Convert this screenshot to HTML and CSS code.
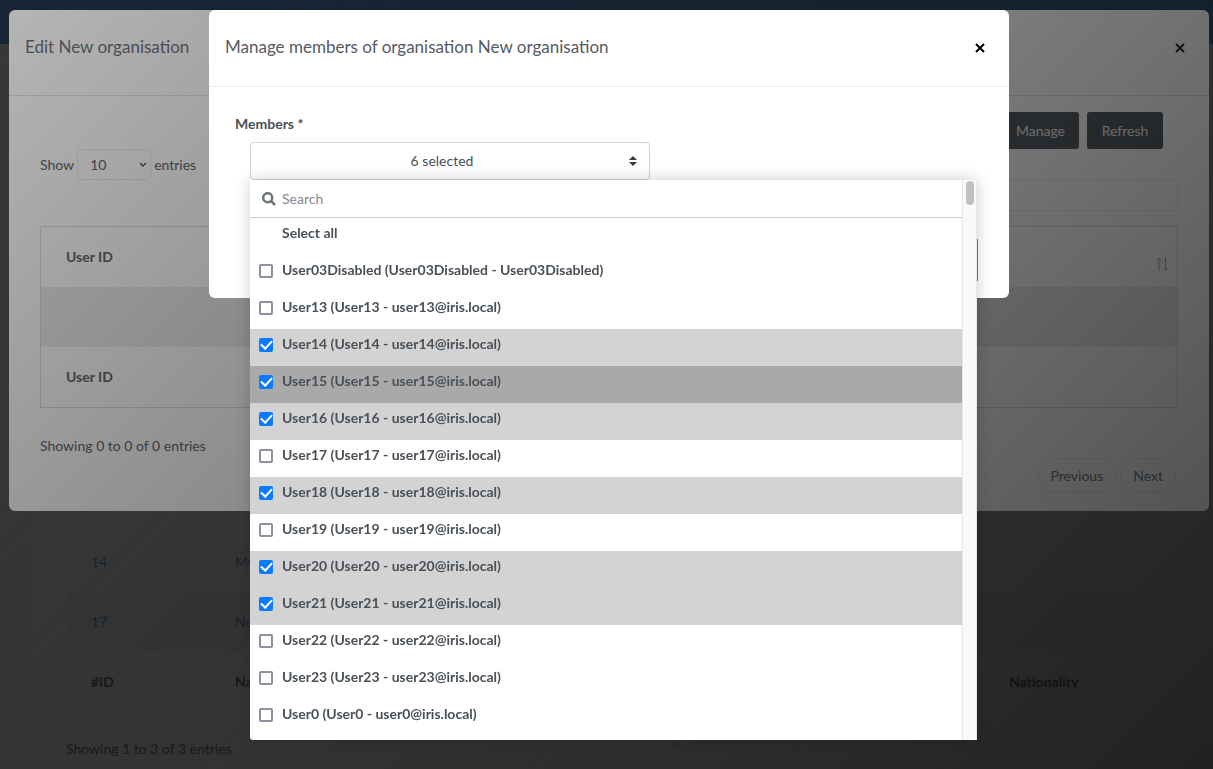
FILE: index.html
```html
<!DOCTYPE html>
<html lang="en">
<head>
<meta charset="utf-8">
<title>Manage organisation members</title>
<link rel="stylesheet" href="styles.css">
</head>
<body>
<div class="page">
  <header class="topbar"></header>
  <main class="card">
    <table class="orgs">
      <tbody>
        <tr><td class="col-id"><a href="#">14</a></td><td><a href="#">My</a></td><td class="col-nat"></td></tr>
        <tr class="odd"><td><a href="#">17</a></td><td><a href="#">New</a></td><td></td></tr>
      </tbody>
      <tfoot>
        <tr><th>#ID</th><th>Name</th><th>Nationality</th></tr>
      </tfoot>
    </table>
    <p class="orgs-info">Showing 1 to 3 of 3 entries</p>
  </main>
</div>
<div class="dim"></div>

<div class="layer">
  <section class="modal modal-wide">
    <header class="modal-head head-tall">
      <h2>Edit New organisation</h2>
      <button class="close" type="button" aria-label="Close"><svg width="10" height="10" viewBox="0 0 10 10"><path d="M1 1l8 8M9 1l-8 8"/></svg></button>
    </header>
    <div class="modal-main">
      <div class="actions">
        <button class="btn-dark" type="button">Manage</button>
        <button class="btn-dark" type="button">Refresh</button>
      </div>
      <label class="length">Show
        <span class="length-box"><select class="length-select"><option>10</option></select><svg width="8" height="6" viewBox="0 0 8 6"><path d="M1 1l3 3 3-3"/></svg></span>
        entries</label>
      <input class="filter" type="search" aria-label="Filter">
      <table class="members">
        <thead><tr><th>User ID</th><th class="sort"><svg width="14" height="14" viewBox="0 0 14 14"><path d="M4 13.500V1M1.500 3.500L4 1l2.500 2.500M10.500 .5V13M8 10.500l2.500 2.500 2.500-2.500"/></svg></th></tr></thead>
        <tbody><tr><td colspan="2"></td></tr></tbody>
        <tfoot><tr><th>User ID</th><th></th></tr></tfoot>
      </table>
      <p class="members-info">Showing 0 to 0 of 0 entries</p>
      <nav class="pager">
        <a href="#">Previous</a>
        <a href="#">Next</a>
      </nav>
    </div>
  </section>
</div>
<div class="dim dim-slope"></div>

<div class="layer">
  <section class="modal modal-medium">
    <header class="modal-head">
      <h2>Manage members of organisation New organisation</h2>
      <button class="close" type="button" aria-label="Close"><svg width="10" height="10" viewBox="0 0 10 10"><path d="M1 1l8 8M9 1l-8 8"/></svg></button>
    </header>
    <form class="modal-form">
      <label class="field-label" for="members">Members *</label>
      <div class="picker">
        <button class="picker-button" id="members" type="button"><span>6 selected</span><svg width="8" height="10" viewBox="0 0 8 10"><path d="M4 0l4 4H0zM4 10L0 6h8z"/></svg></button>
        <div class="menu">
          <div class="menu-list">
            <div class="menu-search">
              <svg width="14" height="14" viewBox="0 0 14 14"><circle cx="5.700" cy="5.700" r="4.500"/><path d="M9 9l4 4"/></svg>
              <input type="text" placeholder="Search" aria-label="Search">
            </div>
            <button class="row row-all" type="button">Select all</button>
            <label class="row"><input type="checkbox">User03Disabled (User03Disabled - User03Disabled)</label>
            <label class="row"><input type="checkbox">User13 (User13 - user13@iris.local)</label>
            <label class="row on"><input type="checkbox" checked>User14 (User14 - user14@iris.local)</label>
            <label class="row on active"><input type="checkbox" checked>User15 (User15 - user15@iris.local)</label>
            <label class="row on"><input type="checkbox" checked>User16 (User16 - user16@iris.local)</label>
            <label class="row"><input type="checkbox">User17 (User17 - user17@iris.local)</label>
            <label class="row on"><input type="checkbox" checked>User18 (User18 - user18@iris.local)</label>
            <label class="row"><input type="checkbox">User19 (User19 - user19@iris.local)</label>
            <label class="row on"><input type="checkbox" checked>User20 (User20 - user20@iris.local)</label>
            <label class="row on"><input type="checkbox" checked>User21 (User21 - user21@iris.local)</label>
            <label class="row"><input type="checkbox">User22 (User22 - user22@iris.local)</label>
            <label class="row"><input type="checkbox">User23 (User23 - user23@iris.local)</label>
            <label class="row"><input type="checkbox">User0 (User0 - user0@iris.local)</label>
          </div>
          <div class="track"><div class="thumb"></div></div>
        </div>
      </div>
      <button class="save" type="submit" aria-label="Save"></button>
    </form>
  </section>
</div>
</body>
</html>
```
FILE: styles.css
```css
* { box-sizing: border-box; }
html, body { height: 100%; }
body {
  margin: 0;
  overflow: hidden;
  background: #f9fbfd;
  color: #495057;
  font: 14px/22px Lato, "Open Sans", sans-serif;
}
button, input, select { font: inherit; color: inherit; }
h2, p { margin: 0; }
a { text-decoration: none; color: inherit; }
svg { display: block; }

.page { min-height: 100%; }
.topbar { height: 44px; background: #70a8ec; }
.card { margin: 0 31px; padding: 488px 35px 0; background: #fff; min-height: 725px; }
.orgs { width: 100%; border-collapse: collapse; table-layout: fixed; color: #777; }
.orgs td, .orgs th { height: 60px; padding: 0 25px; text-align: left; }
.orgs a { color: #7a9fe8; }
.orgs .odd { background: #f5f5f5; }
.col-id { width: 144px; }
.col-nat { width: 163px; }
.orgs-info { margin-top: 26px; color: #808080; }

.dim { position: fixed; inset: 0; background: linear-gradient(135deg, rgba(0, 0, 0, .69), rgba(0, 0, 0, .5)); }
.dim-slope { background: linear-gradient(135deg, rgba(0, 0, 0, .286), rgba(0, 0, 0, .733)); }

.layer { position: fixed; inset: 0; display: flex; justify-content: center; align-items: flex-start; padding: 10px 0 0 5px; }
.modal { width: 100%; background: #fff; border-radius: 6px; }
.modal-wide { max-width: 1200px; color: #63676d; }
.modal-medium { max-width: 800px; }
.modal-head { display: flex; justify-content: space-between; align-items: flex-start; padding: 26px 24px 28px 16px; border-bottom: 1px solid #ebecec; }
.head-tall { padding-bottom: 37px; border-color: #e2e3e4; }
.modal-head h2 { font-size: 17px; line-height: 22px; font-weight: 400; color: #575962; }
.modal-head.head-tall h2 { color: #71737b; }
.close { padding: 0; margin-top: 7px; border: 0; background: none; }
.close svg { fill: none; stroke: #000; stroke-width: 2; }
.head-tall .close svg { stroke: #2c2c2c; }

.modal-main { display: flex; flex-direction: column; padding: 16px 31px 18px; }
.actions { display: flex; justify-content: flex-end; gap: 8px; padding-right: 15px; }
.btn-dark { min-width: 76px; height: 37px; padding: 0 14px; border: 0; border-radius: 3px; background: #585f66; color: #eee; }
.length { display: flex; align-items: center; gap: 3px; }
.length-box { display: grid; width: 74px; }
.length-box > * { grid-area: 1 / 1; }
.length-box svg { align-self: center; justify-self: end; margin-right: 4px; fill: none; stroke: #495057; stroke-width: 1.4; }
.length-select { appearance: none; width: 100%; height: 31px; padding: 0 12px; border: 1px solid #ebecee; border-radius: 4px; background: none; }
.filter { align-self: flex-end; width: 220px; height: 31px; border: 1px solid #ebecee; border-radius: 4px; background: none; }
.members { width: 100%; margin-top: 15px; border: 1px solid #dcdee2; border-collapse: collapse; }
.members th, .members td { height: 60px; padding: 0 25px; text-align: left; }
.members tfoot th { height: 61px; }
.members tbody { background: #ededed; }
.members .sort { padding-right: 8px; }
.sort svg { margin: 14px 0 0 auto; fill: none; stroke: #aaa; stroke-width: 1; }
.members-info { margin-top: 27px; }
.pager { display: flex; justify-content: flex-end; gap: 4px; margin-top: 1px; padding-right: 2px; }
.pager a { padding: 6px 12px 5px; border: 1px solid #ebebeb; border-radius: 18px; color: #7b7f87; }

.modal-form { display: flex; flex-direction: column; align-items: flex-start; padding: 26px 31px 17px 26px; }
.field-label, .row, .members th, .orgs th { font-weight: 700; }
.picker { position: relative; width: 400px; margin: 7px 0 0 15px; }
.picker-button { display: flex; align-items: center; width: 100%; height: 38px; padding: 0 12px 0 4px; border: 1px solid #ced4da; border-radius: 4px; background: #fff; }
.picker-button span { flex: 1; }
.picker-button svg { fill: #343a40; }
.menu { position: absolute; top: 38px; left: 0; display: flex; width: 727px; height: 560px; border-radius: 0 0 3px 3px; background: #fff; box-shadow: 0 0 16px rgba(0, 0, 0, .2); }
.menu-list { flex: 1; }
.menu-search { display: flex; align-items: center; gap: 6px; height: 38px; padding-left: 12px; border-bottom: 1px solid #ccc; }
.menu-search svg { fill: none; stroke: #6c757d; stroke-width: 2.500; }
.menu-search input { flex: 1; padding: 0; border: 0; background: none; }
.menu-search input::placeholder { color: #868a8f; opacity: 1; }
.row { display: flex; align-items: flex-start; width: 100%; height: 37px; padding: 4px 9px 11px; }
.row-all { padding: 4px 32px; border: 0; background: none; text-align: left; }
.row input { appearance: none; flex: none; width: 14px; height: 14px; margin: 5px 9px 0 0; border: 2px solid #8f8f9d; border-radius: 2px; background: #fff; display: grid; place-items: center; }
.row input:checked { border: 0; background: #0a7bff; }
.row input:checked::after { content: ""; width: 9px; height: 5px; margin-top: -3px; border: solid #fff; border-width: 0 0 2px 2px; transform: rotate(-47deg); }
.on { background: #d3d3d3; }
.active { background: #a9a9a9; }
.track { width: 15px; padding: 1px 2px 0 3px; border: solid #e8e8e8; border-width: 0 1px; background: #fafafa; }
.thumb { width: 8px; height: 24px; border-radius: 4px; background: #c1c1c1; }
.save { align-self: flex-end; width: 80px; height: 42px; margin-top: 59px; border: 1px solid #28a745; border-radius: 0; background: #fff; }
```
